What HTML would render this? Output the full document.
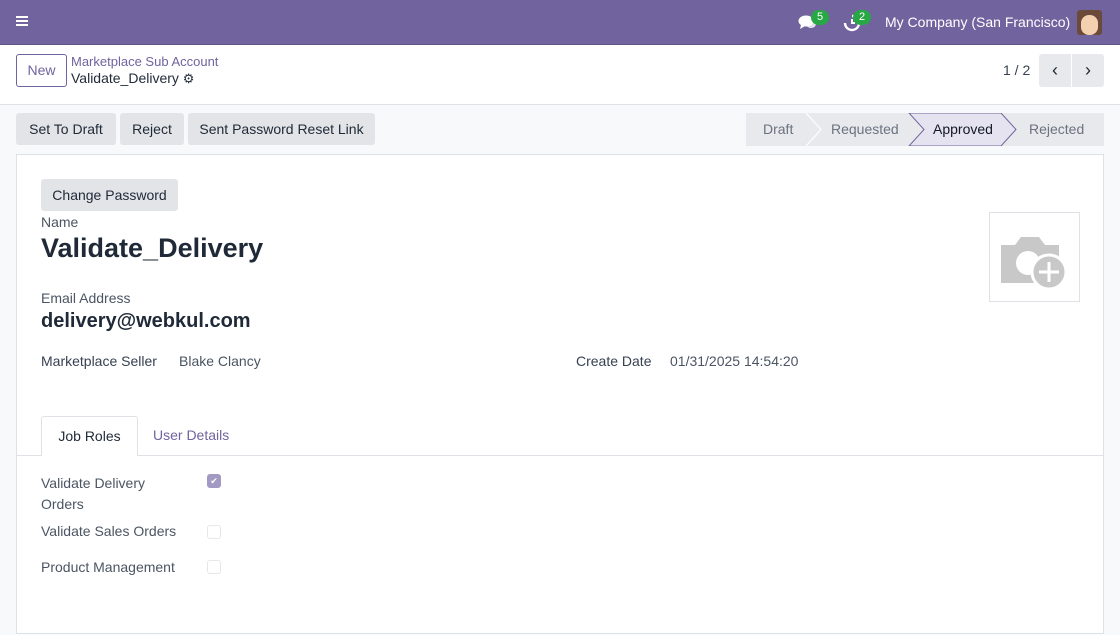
<!DOCTYPE html>
<html><head><meta charset="utf-8"><style>
*{box-sizing:border-box;margin:0;padding:0}
body{width:1120px;height:635px;overflow:hidden;background:#f8f9fa;font-family:"Liberation Sans",sans-serif;color:#374151;font-size:14px;position:relative}
.abs{position:absolute}
.nav{left:0;top:0;width:1120px;height:45px;background:#71639e;border-bottom:1px solid #5f5387}
.cp{left:0;top:45px;width:1120px;height:60px;background:#fff;border-bottom:1px solid #dee2e6}
.btn{position:absolute;background:#e2e4e7;border-radius:3px;height:32px;line-height:32px;font-size:14px;color:#1f2937;text-align:center;font-weight:500}
.card{left:16px;top:154px;width:1088px;height:480px;background:#fff;border:1px solid #dee2e6}
.lbl{position:absolute;color:#4b5563;font-size:14px}
.cb{position:absolute;width:14px;height:14px;border:1px solid #e5e7eb;border-radius:3px}
</style></head><body>
<div class="abs nav">
 <div class="abs" style="left:16px;top:16px;width:12px;height:2px;background:#fff;box-shadow:0 4px 0 #fff,0 8px 0 #fff"></div>
 <svg class="abs" style="left:798px;top:14px" width="20" height="18" viewBox="0 0 20 18"><ellipse cx="8" cy="7" rx="7.5" ry="5.5" fill="#fff"/><path d="M3 11 L2 15 L7 12Z" fill="#fff"/><ellipse cx="13" cy="10" rx="5" ry="4" fill="#fff" opacity=".8"/></svg>
 <div class="abs" style="left:811px;top:10px;width:18px;height:15px;border-radius:8px;background:#28a745;color:#fff;font-size:11px;text-align:center;line-height:15px">5</div>
 <svg class="abs" style="left:843px;top:14px" width="18" height="18" viewBox="0 0 18 18"><path d="M9 2a7 7 0 1 1-7 7" stroke="#fff" stroke-width="2.4" fill="none"/><path d="M9 5v4h3" stroke="#fff" stroke-width="2" fill="none"/></svg>
 <div class="abs" style="left:853px;top:10px;width:18px;height:15px;border-radius:8px;background:#28a745;color:#fff;font-size:11px;text-align:center;line-height:15px">2</div>
 <div class="abs" style="left:885px;top:14px;color:#fff;font-size:14px">My Company (San Francisco)</div>
 <div class="abs" style="left:1077px;top:10px;width:25px;height:25px;border-radius:3px;background:#6b4a3a;overflow:hidden"><div style="margin:5px 0 0 4px;width:17px;height:20px;border-radius:8px;background:#f2d0b0"></div></div>
</div>
<div class="abs cp">
 <div class="abs" style="left:16px;top:9px;width:51px;height:33px;border:1px solid #71639e;border-radius:3px;color:#71639e;text-align:center;line-height:31px;font-weight:500">New</div>
 <div class="abs" style="left:71px;top:9px;color:#71639e;font-size:13px;font-weight:500">Marketplace Sub Account</div>
 <div class="abs" style="left:71px;top:25px;color:#1f2937;font-size:14px">Validate_Delivery <span style="font-size:13px">⚙</span></div>
 <div class="abs" style="left:1003px;top:17px;color:#374151">1 / 2</div>
 <div class="abs" style="left:1039px;top:9px;width:32px;height:33px;background:#e7e9ec;border-radius:3px 0 0 3px;text-align:center;line-height:32px;font-size:18px;color:#1f2937">‹</div>
 <div class="abs" style="left:1072px;top:9px;width:32px;height:33px;background:#e7e9ec;border-radius:0 3px 3px 0;text-align:center;line-height:32px;font-size:18px;color:#1f2937">›</div>
</div>
<div class="btn" style="left:16px;top:113px;width:100px">Set To Draft</div>
<div class="btn" style="left:120px;top:113px;width:64px">Reject</div>
<div class="btn" style="left:188px;top:113px;width:187px">Sent Password Reset Link</div>
<svg class="abs" style="left:746px;top:113px" width="358" height="33" viewBox="0 0 358 33">
 <rect width="358" height="33" fill="#e7e9ec"/>
 <path d="M163 0 L255 0 L270 16.5 L255 33 L163 33 L178 16.5Z" fill="#e6e3f0" stroke="#71639e" stroke-width="1"/>
 <path d="M60 0 L75 16.5 L60 33" fill="none" stroke="#fff" stroke-width="1.2"/>
 <text x="17" y="21" font-family="Liberation Sans" font-size="14" fill="#6b7280">Draft</text>
 <text x="85" y="21" font-family="Liberation Sans" font-size="14" fill="#6b7280">Requested</text>
 <text x="187" y="21" font-family="Liberation Sans" font-size="14" fill="#111827" font-weight="500">Approved</text>
 <text x="283" y="21" font-family="Liberation Sans" font-size="14" fill="#6b7280">Rejected</text>
</svg>
<div class="abs card">
 <div class="btn" style="left:24px;top:24px;width:137px">Change Password</div>
 <div class="lbl" style="left:24px;top:59px">Name</div>
 <div class="abs" style="left:24px;top:78px;font-size:27px;font-weight:bold;color:#1f2937">Validate_Delivery</div>
 <div class="lbl" style="left:24px;top:135px">Email Address</div>
 <div class="abs" style="left:24px;top:155px;font-size:20px;font-weight:bold;color:#1f2937">delivery@webkul.com</div>
 <div class="lbl" style="left:24px;top:198px;font-weight:500;color:#374151">Marketplace Seller</div>
 <div class="lbl" style="left:162px;top:198px">Blake Clancy</div>
 <div class="lbl" style="left:559px;top:198px;font-weight:500;color:#374151">Create Date</div>
 <div class="lbl" style="left:653px;top:198px">01/31/2025 14:54:20</div>
 <div class="abs" style="left:972px;top:57px;width:91px;height:90px;border:1px solid #dee2e6">
  <svg width="89" height="88" viewBox="0 0 89 88"><path d="M11 32 h14 l6 -8 h18 l6 8 h14 v38 h-58z" fill="#c8c8c8"/><circle cx="38" cy="50" r="12" fill="#fff"/><circle cx="59" cy="59" r="17" fill="#c8c8c8" stroke="#fff" stroke-width="3"/><path d="M59 49v20M49 59h20" stroke="#fff" stroke-width="3"/></svg>
 </div>
 <div class="abs" style="left:0;top:300px;width:1086px;border-top:1px solid #dee2e6"></div>
 <div class="abs" style="left:24px;top:261px;width:97px;height:40px;background:#fff;border:1px solid #dee2e6;border-bottom:none;border-radius:3px 3px 0 0;text-align:center;line-height:38px;color:#1f2937">Job Roles</div>
 <div class="abs" style="left:136px;top:272px;color:#71639e">User Details</div>
 <div class="lbl" style="left:24px;top:318px;line-height:21px">Validate Delivery<br>Orders</div>
 <div class="cb" style="left:190px;top:319px;background:#a39ac4;border-color:#a39ac4;color:#fff;font-size:9px;text-align:center;line-height:12px">✔</div>
 <div class="lbl" style="left:24px;top:368px">Validate Sales Orders</div>
 <div class="cb" style="left:190px;top:370px"></div>
 <div class="lbl" style="left:24px;top:404px">Product Management</div>
 <div class="cb" style="left:190px;top:405px"></div>
</div>
</body></html>
